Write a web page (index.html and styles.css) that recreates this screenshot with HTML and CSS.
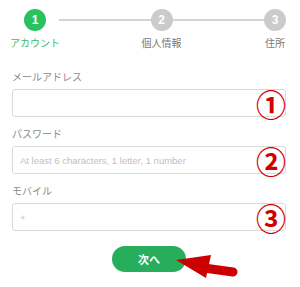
FILE: index.html
```html
<!DOCTYPE html>
<html lang="ja">
<head>
<meta charset="utf-8">
<title>Sign up</title>
<link rel="stylesheet" href="styles.css">
</head>
<body>
<div class="page">
  <div class="stepper">
    <div class="step active">
      <div class="step-dot">1</div>
      <div class="step-label">アカウント</div>
    </div>
    <div class="step-line first"></div>
    <div class="step">
      <div class="step-dot">2</div>
      <div class="step-label">個人情報</div>
    </div>
    <div class="step-line"></div>
    <div class="step">
      <div class="step-dot">3</div>
      <div class="step-label">住所</div>
    </div>
  </div>

  <form class="form">
    <div class="field">
      <label class="field-label">メールアドレス</label>
      <div class="input-wrap">
        <input class="input" type="text">
        <span class="mark">①</span>
      </div>
    </div>
    <div class="field">
      <label class="field-label">パスワード</label>
      <div class="input-wrap">
        <input class="input" type="text" placeholder="At least 6 characters, 1 letter, 1 number">
        <span class="mark">②</span>
      </div>
    </div>
    <div class="field">
      <label class="field-label">モバイル</label>
      <div class="input-wrap">
        <input class="input" type="text" placeholder="+">
        <span class="mark">③</span>
      </div>
    </div>
    <div class="actions">
      <button class="btn" type="button">次へ</button>
    </div>
  </form>

  <svg class="arrow" width="300" height="287" viewBox="0 0 300 287">
    <line x1="204" y1="268" x2="233" y2="272" stroke="#cc0000" stroke-width="9" stroke-linecap="round"/>
    <polygon points="176,260 211,255 206,278" fill="#cc0000"/>
  </svg>
</div>
</body>
</html>
```

FILE: styles.css
```css
html, body {
  margin: 0;
  padding: 0;
  background: #ffffff;
}

body {
  font-family: "Liberation Sans", "Noto Sans CJK JP", sans-serif;
}

.page {
  position: relative;
  width: 300px;
  height: 287px;
  box-sizing: border-box;
  padding: 9px 14px 0 12px;
  overflow: hidden;
}

.stepper {
  display: flex;
  align-items: flex-start;
  margin-left: 12px;
}

.step {
  width: 22px;
  display: flex;
  flex-direction: column;
  align-items: center;
}

.step-dot {
  width: 22px;
  height: 22px;
  border-radius: 50%;
  background: #cbcbcb;
  color: #ffffff;
  font-size: 12px;
  font-weight: bold;
  line-height: 22px;
  text-align: center;
}

.step-label {
  margin-top: 5px;
  font-size: 10px;
  line-height: 14px;
  color: #777777;
  white-space: nowrap;
  font-family: "Noto Sans CJK JP", sans-serif;
}

.step.active .step-dot {
  background: #28c35f;
}

.step.active .step-label {
  color: #3dba6a;
}

.step-line {
  flex: 1;
  height: 2px;
  margin-top: 10px;
  background: #d4d4d4;
}

.step-line.first {
  margin-left: 13px;
}

.form {
  margin: 20px 0 0 0;
}

.field {
  margin-bottom: 10px;
}

.field-label {
  display: block;
  font-family: "Noto Sans CJK JP", sans-serif;
  font-size: 10px;
  line-height: 14px;
  color: #8a8a8a;
  margin-bottom: 5px;
}

.input-wrap {
  position: relative;
}

.input {
  display: block;
  width: 100%;
  height: 28px;
  box-sizing: border-box;
  margin: 0;
  padding: 0 7px;
  border: 1px solid #d9d9d9;
  border-radius: 3px;
  font-family: "Liberation Sans", sans-serif;
  font-size: 9.5px;
  color: #555555;
  background: #ffffff;
  outline: none;
}

.input::placeholder {
  color: #c0c0c0;
}

.mark {
  position: absolute;
  right: 0;
  top: 50%;
  transform: translateY(-50%);
  font-family: "Noto Sans CJK JP", sans-serif;
  font-size: 30px;
  font-weight: bold;
  line-height: 1;
  color: #d40000;
}

.actions {
  display: flex;
  justify-content: center;
  margin-top: 15px;
}

.btn {
  width: 74px;
  height: 26px;
  border: none;
  border-radius: 13px;
  background: #27ae5c;
  color: #ffffff;
  font-family: "Noto Sans CJK JP", sans-serif;
  font-size: 11px;
  font-weight: bold;
  padding: 0;
}

.arrow {
  position: absolute;
  left: 0;
  top: 0;
  pointer-events: none;
}
```
